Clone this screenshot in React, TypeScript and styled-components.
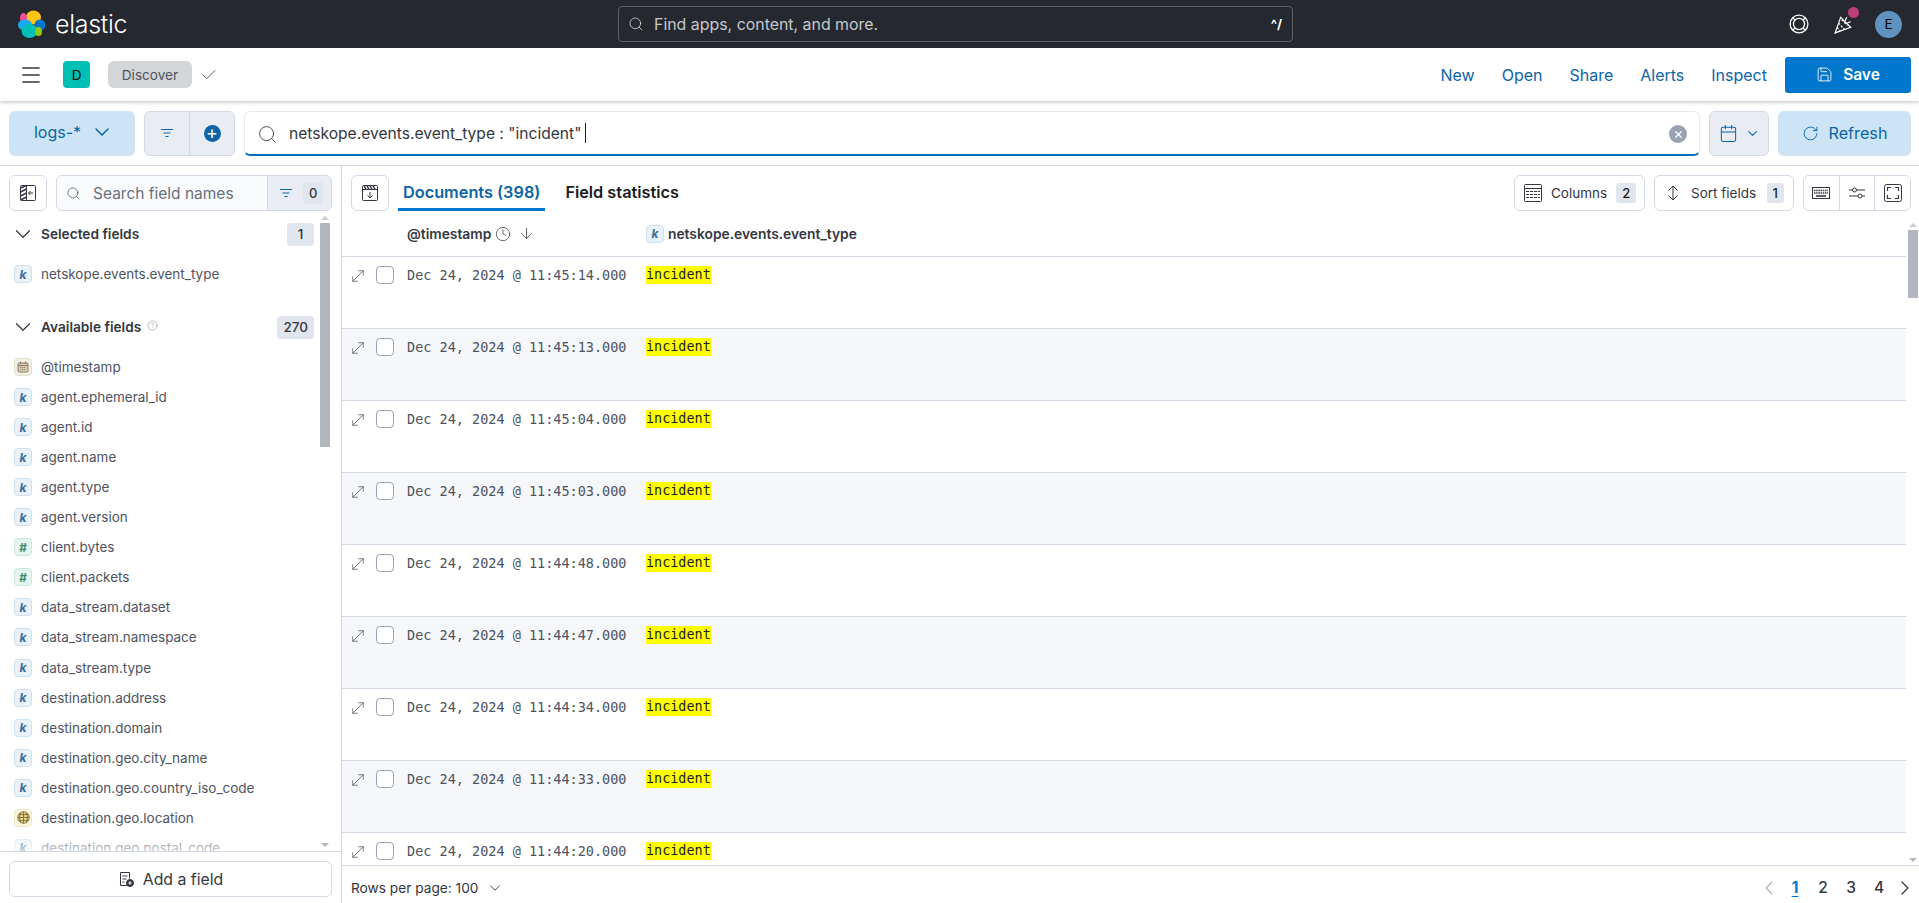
import React from "react";
import styled, { createGlobalStyle } from "styled-components";
import {
  ArrowDown,
  Calendar,
  Check,
  ChevronDown,
  ChevronLeft,
  ChevronRight,
  CircleHelp,
  Clock,
  Menu,
  MoveDiagonal,
  RotateCw,
  Save,
  Search,
  X,
} from "lucide-react";

const GlobalStyle = createGlobalStyle`
  html, body { margin: 0; padding: 0; height: 100%; overflow: hidden; background: #fff; }
  body { font-family: "Inter", "Liberation Sans", sans-serif; color: #343741; font-size: 14px; }
  * { box-sizing: border-box; }
  button { font-family: inherit; }
`;

const Page = styled.div`
  display: flex;
  flex-direction: column;
  height: 903px;
  overflow: hidden;
`;
const TopBar = styled.header`
  display: grid;
  grid-template-columns: 618px 675px 1fr;
  align-items: center;
  height: 48px;
  flex: none;
  background: #25282f;
`;
const Brand = styled.div`
  display: flex;
  align-items: center;
  gap: 9px;
  padding-left: 18px;
`;
const Wordmark = styled.span`
  font-size: 25px;
  font-weight: 300;
  letter-spacing: -0.3px;
  color: #fff;
`;
const GlobalSearch = styled.div`
  display: flex;
  align-items: center;
  height: 36px;
  padding: 0 10px 0 9px;
  gap: 10px;
  border: 1px solid #5c5f66;
  border-radius: 4px;
  font-size: 15.9px;
  color: #c6c8cc;
`;
const ShortcutKey = styled.span`
  margin-left: auto;
  font-size: 13px;
  font-weight: 700;
  color: #fff;
`;
const TopActions = styled.div`
  display: flex;
  align-items: center;
  justify-content: flex-end;
  gap: 21px;
  padding-right: 17px;
`;
const NewsIcon = styled.span`
  position: relative;
  display: flex;
  margin-left: 4px;
`;
const NewsDot = styled.span`
  position: absolute;
  top: -7px;
  right: -5px;
  width: 11px;
  height: 11px;
  border-radius: 50%;
  background: #bc3f7a;
`;
const Avatar = styled.span`
  display: flex;
  align-items: center;
  justify-content: center;
  width: 27px;
  height: 27px;
  border-radius: 50%;
  font-size: 13.5px;
  color: #000;
  background: #6092c0;
`;

const AppBar = styled.div`
  position: relative;
  z-index: 2;
  display: flex;
  align-items: center;
  height: 53px;
  flex: none;
  padding: 0 8px 0 19px;
  background: #fff;
  box-shadow: 0 1px 4px rgba(60, 66, 80, 0.35);
`;
const AppTile = styled.span`
  display: flex;
  align-items: center;
  justify-content: center;
  width: 27px;
  height: 27px;
  margin-left: 20px;
  border-radius: 4px;
  font-size: 13.5px;
  color: #000;
  background: #00bfb3;
`;
const Crumb = styled.span`
  display: flex;
  align-items: center;
  justify-content: center;
  width: 84px;
  height: 27px;
  margin-left: 18px;
  border-radius: 6px;
  font-size: 13.6px;
  color: #4e535f;
  background: #d3d5d8;
`;
const CrumbCheck = styled.span`
  display: flex;
  margin-left: 8px;
  color: #343741;
`;
const AppLinks = styled.nav`
  display: flex;
  align-items: center;
  gap: 27px;
  margin-left: auto;
`;
const AppLink = styled.a`
  font-size: 16px;
  font-weight: 400;
  color: #0b64a8;
`;
const SaveButton = styled.button`
  display: flex;
  align-items: center;
  justify-content: center;
  gap: 10px;
  width: 126px;
  height: 36px;
  margin-left: 18px;
  padding: 0;
  border: none;
  border-radius: 3px;
  font-size: 15.5px;
  font-weight: 600;
  color: #fff;
  background: #0077cc;
`;

const QueryRow = styled.div`
  display: flex;
  align-items: center;
  gap: 9px;
  height: 65px;
  flex: none;
  padding: 0 8px 0 9px;
  border-bottom: 1px solid #d3dae6;
`;
const DataViewButton = styled.button`
  display: flex;
  align-items: center;
  justify-content: center;
  gap: 9px;
  width: 126px;
  height: 45px;
  padding: 0 0 2px 4px;
  border: none;
  border-radius: 6px;
  font-size: 16px;
  font-weight: 400;
  color: #0b64a8;
  background: #cce4f5;
`;
const FilterGroup = styled.div`
  display: flex;
  width: 91px;
  height: 45px;
  flex: none;
  border: 1px solid #d3dae6;
  border-radius: 6px;
  background: #e9edf3;
`;
const FilterCell = styled.span<{ $divided?: boolean }>`
  display: flex;
  flex: 1;
  align-items: center;
  justify-content: center;
  color: #0b64a8;
  border-right: ${({ $divided }) => ($divided ? "1px solid #d3dae6" : "none")};
`;
const AddCircle = styled.span`
  display: flex;
  align-items: center;
  justify-content: center;
  width: 17px;
  height: 17px;
  border-radius: 50%;
  font-size: 18px;
  line-height: 1;
  color: #fff;
  background: #0b64a8;
`;
const QueryBar = styled.div`
  display: flex;
  flex: 1;
  align-items: center;
  height: 45px;
  padding: 0 12px 0 12px;
  border: 1px solid #e4e8f0;
  border-bottom: 2px solid #0071c2;
  border-radius: 6px;
  background: #fff;
`;
const QueryIcon = styled.span`
  display: flex;
  margin-top: 4px;
`;
const QueryText = styled.span`
  margin: 1px 0 0 11px;
  font-size: 15.6px;
  white-space: pre;
  color: #343741;
`;
const Caret = styled.span`
  width: 1px;
  height: 20px;
  margin-left: 4px;
  background: #1a1c21;
`;
const ClearButton = styled.span`
  display: flex;
  align-items: center;
  justify-content: center;
  width: 18px;
  height: 18px;
  margin: 3px 0 0 auto;
  border-radius: 50%;
  color: #fff;
  background: #98a2b3;
`;
const DateButton = styled.button`
  display: flex;
  align-items: center;
  justify-content: center;
  gap: 7px;
  width: 60px;
  height: 45px;
  padding: 0;
  flex: none;
  border: 1px solid #d3dae6;
  border-radius: 6px;
  color: #0b64a8;
  background: #e9edf3;
`;
const RefreshButton = styled.button`
  display: flex;
  align-items: center;
  justify-content: center;
  gap: 10px;
  width: 133px;
  height: 45px;
  padding: 0;
  flex: none;
  border: none;
  border-radius: 6px;
  font-size: 16.2px;
  font-weight: 400;
  color: #0b64a8;
  background: #cce4f5;
`;

const Workspace = styled.div`
  display: flex;
  flex: 1;
  min-height: 0;
`;
const Sidebar = styled.aside`
  display: flex;
  flex-direction: column;
  width: 342px;
  flex: none;
  border-right: 1px solid #d3dae6;
`;
const SideTop = styled.div`
  display: flex;
  gap: 9px;
  flex: none;
  padding: 9px 9px 0;
`;
const IconButton = styled.button`
  display: flex;
  align-items: center;
  justify-content: center;
  width: 38px;
  height: 36px;
  padding: 0;
  flex: none;
  border: 1px solid #d3dae6;
  border-radius: 6px;
  color: #343741;
  background: #fff;
`;
const FieldSearch = styled.div`
  display: flex;
  flex: 1;
  align-items: stretch;
  height: 36px;
  border: 1px solid #d3dae6;
  border-radius: 6px;
  overflow: hidden;
  background: #fafbfd;
`;
const FieldSearchInput = styled.div`
  display: flex;
  flex: 1;
  align-items: center;
  gap: 12px;
  padding-left: 9px;
  font-size: 15.5px;
  color: #69707d;
`;
const FieldFilter = styled.div`
  display: flex;
  align-items: center;
  gap: 10px;
  width: 64px;
  padding-left: 11px;
  border-left: 1px solid #d3dae6;
  background: #e9edf3;
  color: #0b64a8;
`;
const ZeroCount = styled.span`
  font-size: 13px;
  font-weight: 500;
  padding: 3px 6px;
  border-radius: 3px;
  color: #343741;
  background: #e0e5ee;
`;
const FieldScroller = styled.div`
  position: relative;
  flex: 1;
  min-height: 0;
  overflow: hidden;
  padding: 11px 0 0 14px;
`;
const SectionHead = styled.div<{ $gap: number }>`
  display: flex;
  align-items: center;
  height: 24px;
  padding-right: 27px;
  margin-bottom: ${({ $gap }) => $gap}px;
  font-size: 13.7px;
  font-weight: 600;
  color: #343741;
`;
const SectionChevron = styled.span`
  display: flex;
  margin-left: -4px;
`;
const SectionTitle = styled.span`
  margin-left: 5px;
`;
const HelpMark = styled.span`
  display: flex;
  margin: -3px 0 0 6px;
  color: #69707d;
`;
const CountBadge = styled.span`
  display: flex;
  align-items: center;
  justify-content: center;
  height: 23px;
  min-width: 27px;
  padding: 0 6px;
  margin-left: auto;
  border-radius: 4px;
  font-size: 13.5px;
  font-weight: 500;
  color: #343741;
  background: #e0e5ee;
`;
const FieldRow = styled.div<{ $gap?: number }>`
  display: flex;
  align-items: center;
  gap: 9px;
  height: 30.06px;
  margin-bottom: ${({ $gap }) => $gap ?? 0}px;
  font-size: 13.5px;
  color: #4e535f;
`;
const TypeTile = styled.span<{ $kind: "k" | "n" | "d" | "g" }>`
  display: flex;
  align-items: center;
  justify-content: center;
  width: 18px;
  height: 18px;
  flex: none;
  border-radius: 4px;
  font-size: 12px;
  font-weight: 700;
  font-style: italic;
  font-family: "Inter", sans-serif;
  color: ${({ $kind }) =>
    ({ k: "#3a6d9c", n: "#3d8a6d", d: "#8a7b5c", g: "#7d6c20" })[$kind]};
  background: ${({ $kind }) =>
    ({ k: "#eaf2f9", n: "#e6f5f0", d: "#f3f0e8", g: "#fbf6e2" })[$kind]};
  border: 1px solid
    ${({ $kind }) =>
      ({ k: "#cfe0ee", n: "#c9e9dd", d: "#e6e0d0", g: "#f0e8c4" })[$kind]};
`;
const FieldFade = styled.div`
  position: absolute;
  left: 0;
  right: 14px;
  bottom: 0;
  height: 18px;
  background: linear-gradient(rgba(255, 255, 255, 0.1), rgba(255, 255, 255, 0.7));
`;
const SideScrollbar = styled.div`
  position: absolute;
  top: 5px;
  right: 11px;
  bottom: 4px;
  width: 10px;
  display: flex;
  flex-direction: column;
  align-items: center;
`;
const ScrollThumb = styled.div<{ $height: number }>`
  width: 10px;
  height: ${({ $height }) => $height}px;
  background: #b2b6be;
`;
const ArrowUp = styled.span`
  width: 0;
  height: 0;
  margin-bottom: 3px;
  border: 4px solid transparent;
  border-top: none;
  border-bottom: 4px solid #c8ccd3;
`;
const ArrowDownMark = styled.span`
  width: 0;
  height: 0;
  margin-top: auto;
  border: 4px solid transparent;
  border-bottom: none;
  border-top: 4px solid #b2b6be;
`;
const SideFooter = styled.div`
  flex: none;
  height: 52px;
  padding: 9px 9px 0;
  border-top: 1px solid #d3dae6;
`;
const AddFieldButton = styled.button`
  display: flex;
  align-items: center;
  justify-content: center;
  gap: 9px;
  width: 100%;
  height: 36px;
  border: 1px solid #d3dae6;
  border-radius: 6px;
  font-size: 15.8px;
  color: #343741;
  background: #fff;
`;

const Main = styled.main`
  display: flex;
  flex: 1;
  flex-direction: column;
  min-width: 0;
`;
const MainTop = styled.div`
  display: flex;
  align-items: flex-start;
  height: 45px;
  flex: none;
  padding: 9px 8px 0 9px;
`;
const Tabs = styled.div`
  display: flex;
  gap: 15px;
  margin-left: 9px;
`;
const Tab = styled.span<{ $active?: boolean }>`
  display: flex;
  align-items: center;
  height: 36px;
  padding: 0 5px;
  font-size: 16.3px;
  font-weight: 600;
  color: ${({ $active }) => ($active ? "#0b64a8" : "#1a1c21")};
  border-bottom: 3px solid ${({ $active }) => ($active ? "#0077cc" : "transparent")};
`;
const GridTools = styled.div`
  display: flex;
  gap: 9px;
  margin-left: auto;
`;
const ToolButton = styled.button<{ $width: number }>`
  display: flex;
  align-items: center;
  gap: 9px;
  width: ${({ $width }) => $width}px;
  height: 36px;
  padding: 0 9px;
  border: 1px solid #d3dae6;
  border-radius: 6px;
  font-size: 13.5px;
  white-space: nowrap;
  color: #343741;
  background: #fff;

  svg {
    flex: none;
  }
`;
const ToolCount = styled.span`
  padding: 2px 6px;
  margin-left: auto;
  border-radius: 3px;
  font-size: 13px;
  font-weight: 500;
  color: #1a1c21;
  background: #e0e5ee;
`;
const ToolGroup = styled.div`
  display: flex;
  width: 108px;
  height: 36px;
  border: 1px solid #d3dae6;
  border-radius: 6px;
`;
const ToolCell = styled.span<{ $divided?: boolean }>`
  display: flex;
  flex: 1;
  align-items: center;
  justify-content: center;
  color: #343741;
  border-right: ${({ $divided }) => ($divided ? "1px solid #d3dae6" : "none")};
`;
const GridArea = styled.div`
  display: flex;
  flex: 1;
  min-height: 0;
`;
const GridBody = styled.div`
  flex: 1;
  min-width: 0;
  overflow: hidden;
`;
const GridHead = styled.div`
  display: flex;
  align-items: center;
  height: 46px;
  padding-left: 65px;
  border-bottom: 1px solid #d3dae6;
  font-size: 13.8px;
  font-weight: 600;
  color: #343741;
`;
const TimeHead = styled.span`
  display: flex;
  align-items: center;
  gap: 4px;
  width: 239px;
`;
const SortMark = styled.span`
  display: flex;
  margin-left: 3px;
`;
const FieldHead = styled.span`
  display: flex;
  align-items: center;
  gap: 4px;
`;
const DocRow = styled.div<{ $striped: boolean }>`
  display: flex;
  align-items: flex-start;
  height: 72px;
  padding: 9px 0 0 7px;
  border-bottom: 1px solid #d3dae6;
  background: ${({ $striped }) => ($striped ? "#f5f7fa" : "#fff")};
`;
const ExpandMark = styled.span`
  display: flex;
  width: 27px;
  margin-top: 1px;
  color: #4e535f;
`;
const RowCheck = styled.span`
  width: 18px;
  height: 18px;
  flex: none;
  border: 1px solid #98a2b3;
  border-radius: 4px;
  background: #fff;
`;
const DateCell = styled.span`
  width: 239px;
  margin-left: 13px;
  font-family: "DejaVu Sans Mono", "Liberation Mono", monospace;
  font-size: 13.5px;
  line-height: 18px;
  color: #4e535f;
`;
const Highlight = styled.mark`
  font-family: "DejaVu Sans Mono", "Liberation Mono", monospace;
  font-size: 13.45px;
  line-height: 18px;
  color: #1a1c21;
  background: #ffff00;
`;
const GridScrollbar = styled.div`
  width: 13px;
  flex: none;
  display: flex;
  flex-direction: column;
  align-items: center;
  padding: 12px 1px 3px 2px;
`;
const GridFooter = styled.footer`
  display: flex;
  align-items: center;
  height: 38px;
  flex: none;
  padding: 6px 2px 0 9px;
  border-top: 1px solid #d3dae6;
  font-size: 13.7px;
  color: #343741;
`;
const RowsPer = styled.span`
  display: flex;
  align-items: center;
  gap: 8px;
`;
const Pager = styled.nav`
  display: flex;
  align-items: center;
  margin-left: auto;
`;
const PageNum = styled.span<{ $current?: boolean }>`
  width: 28px;
  text-align: center;
  font-size: 15.5px;
  font-weight: ${({ $current }) => ($current ? 700 : 500)};
  color: ${({ $current }) => ($current ? "#0077cc" : "#343741")};
  text-decoration: ${({ $current }) => ($current ? "underline" : "none")};
  text-underline-offset: 3px;
`;
const PagerArrow = styled.span<{ $off?: boolean }>`
  display: flex;
  color: ${({ $off }) => ($off ? "#a9b3c2" : "#343741")};
`;

const ElasticLogo = () => (
  <svg width="28" height="28" viewBox="0 0 28 28">
    <ellipse cx="15.5" cy="7.5" rx="7.5" ry="7" fill="#fec514" />
    <ellipse cx="5.5" cy="8" rx="3.5" ry="5" fill="#f04e98" />
    <ellipse cx="7" cy="15" rx="7" ry="5.5" fill="#1ba9f5" />
    <ellipse cx="22" cy="15" rx="5.5" ry="5.5" fill="#0077cc" />
    <ellipse cx="11.5" cy="21" rx="8" ry="7" fill="#00bfb3" />
    <ellipse cx="20.5" cy="21.5" rx="3.5" ry="4.5" fill="#93c90e" />
  </svg>
);

const FilterIcon = () => (
  <svg width="14" height="14" viewBox="0 0 14 14" stroke="currentColor" fill="none">
    <path d="M1 3.5h12M3.5 7h7M5.5 10.5h3" />
  </svg>
);

const CollapseIcon = () => (
  <svg width="18" height="18" viewBox="0 0 18 18" fill="none" stroke="currentColor">
    <rect x="1.5" y="1.5" width="15" height="15" rx="1" />
    <path d="M7.5 1.5v15M14 9H9.5M11.5 7L9.5 9l2 2" />
    <path d="M1.5 4l6-2.5M1.5 8l6-3M1.5 12l6-3M1.5 16l6-3" strokeWidth="1.4" />
  </svg>
);

const DisplayIcon = () => (
  <svg width="18" height="18" viewBox="0 0 18 18" fill="none" stroke="currentColor">
    <rect x="1.5" y="1.5" width="15" height="15" rx="1" />
    <path d="M1.5 5.5h15M9 8v6M6.5 11.5L9 14l2.5-2.5" />
    <path d="M3 1.5L5 5.5M6 1.5L8 5.5M9 1.5L11 5.5M12 1.5L14 5.5" strokeWidth="1.5" />
  </svg>
);

const PartyIcon = () => (
  <svg width="20" height="20" viewBox="0 0 18 18" fill="none" stroke="#fff" strokeWidth="1.1">
    <path d="M6 3L1 17l14-5z" />
    <path d="M4 8l6 6.5M2.8 12l2.8 3.5M7 5.2l5 5.2" strokeDasharray="2 1.3" />
    <path d="M10 6l1.5-3M12 8l3-1" />
  </svg>
);

const HelpIcon = () => (
  <svg width="20" height="20" viewBox="0 0 18 18" fill="none" stroke="#fff" strokeWidth="1.2">
    <circle cx="9" cy="9" r="8" />
    <circle cx="9" cy="9" r="5" />
    <path d="M3.3 3.3l2.2 2.2M14.7 3.3l-2.2 2.2M3.3 14.7l2.2-2.2M14.7 14.7l-2.2-2.2" />
  </svg>
);

const ColumnsIcon = () => (
  <svg width="18" height="18" viewBox="0 0 18 18" fill="none" stroke="currentColor">
    <rect x="0.5" y="0.5" width="17" height="17" rx="1" />
    <path d="M0.5 4.5h17" />
    <path d="M2 7.5h14M2 10.5h14M2 13.5h14" strokeDasharray="3.2 0.8" strokeWidth="1.2" />
  </svg>
);

const SortIcon = () => (
  <svg width="18" height="16" viewBox="0 0 18 16" fill="none" stroke="currentColor">
    <path d="M9 1v14M4.5 5.5L9 1l4.5 4.5M4.5 10.5L9 15l4.5-4.5" />
  </svg>
);

const KeyboardIcon = () => (
  <svg width="18" height="14" viewBox="0 0 18 14" fill="none" stroke="currentColor">
    <rect x="0.5" y="1.5" width="17" height="11" />
    <path d="M2 4.5h14M2 7h14" strokeDasharray="1.5 0.7" strokeWidth="1.6" />
    <path d="M4 10h10" strokeWidth="1.6" />
  </svg>
);

const TuneIcon = () => (
  <svg width="16" height="14" viewBox="0 0 16 14" fill="none" stroke="currentColor">
    <path d="M0 4h3.5M7.5 4H16M0 10h9M13 10h3" />
    <circle cx="5.5" cy="4" r="2" />
    <circle cx="11" cy="10" r="2" />
  </svg>
);

const FullScreenIcon = () => (
  <svg width="18" height="18" viewBox="0 0 18 18" fill="none" stroke="currentColor">
    <rect x="0.5" y="0.5" width="17" height="17" rx="2" />
    <path d="M3.5 7V3.5H7M11 3.5h3.5V7M14.5 11v3.5H11M7 14.5H3.5V11" strokeWidth="1.2" />
  </svg>
);

const TableGlyph = () => (
  <svg width="16" height="16" viewBox="0 0 16 16" fill="none" stroke="#343741">
    <path d="M10.5 14.5h-8v-13h9v6" />
    <path d="M4.5 5h5M4.5 8h4M4.5 11h2" />
    <circle cx="12" cy="12" r="3.5" fill="#343741" />
    <path d="M10.3 12h3.4M12 10.3v3.4" stroke="#fff" />
  </svg>
);

const GlobeGlyph = () => (
  <svg width="13" height="13" viewBox="0 0 12 12" fill="none" stroke="#7d6c20" strokeWidth="0.8">
    <circle cx="6" cy="6" r="5.3" fill="#e4d99f" />
    <path d="M0.7 6h10.6M6 0.7v10.6M1.5 3.3h9M1.5 8.7h9M3.6 1.2c-1.6 3-1.6 6.6 0 9.6M8.4 1.2c1.6 3 1.6 6.6 0 9.6" />
  </svg>
);

const DateGlyph = () => (
  <svg width="12" height="12" viewBox="0 0 12 12" fill="none" stroke="#8a7b5c">
    <rect x="1" y="2" width="10" height="9" rx="1" fill="#d8d0bc" />
    <path d="M1 4.5h10M3.5 0.5v2.5M8.5 0.5v2.5" />
    <path d="M3 6.5h6M3 8.5h6" strokeDasharray="1.2 0.8" />
  </svg>
);

type Kind = "k" | "n" | "d" | "g";

const availableFields: [Kind, string][] = [
  ["d", "@timestamp"],
  ["k", "agent.ephemeral_id"],
  ["k", "agent.id"],
  ["k", "agent.name"],
  ["k", "agent.type"],
  ["k", "agent.version"],
  ["n", "client.bytes"],
  ["n", "client.packets"],
  ["k", "data_stream.dataset"],
  ["k", "data_stream.namespace"],
  ["k", "data_stream.type"],
  ["k", "destination.address"],
  ["k", "destination.domain"],
  ["k", "destination.geo.city_name"],
  ["k", "destination.geo.country_iso_code"],
  ["g", "destination.geo.location"],
  ["k", "destination.geo.postal_code"],
];

const times = ["11:45:14", "11:45:13", "11:45:04", "11:45:03", "11:44:48", "11:44:47", "11:44:34", "11:44:33", "11:44:20"];

const TypeIcon = ({ kind }: { kind: Kind }) => (
  <TypeTile $kind={kind}>
    {kind === "k" && "k"}
    {kind === "n" && "#"}
    {kind === "d" && <DateGlyph />}
    {kind === "g" && <GlobeGlyph />}
  </TypeTile>
);

const App = () => {
  return (
    <Page>
      <GlobalStyle />
      <TopBar>
        <Brand>
          <ElasticLogo />
          <Wordmark>elastic</Wordmark>
        </Brand>
        <GlobalSearch>
          <Search size={16} strokeWidth={1} color="#fff" />
          Find apps, content, and more.
          <ShortcutKey>^/</ShortcutKey>
        </GlobalSearch>
        <TopActions>
          <HelpIcon />
          <NewsIcon>
            <PartyIcon />
            <NewsDot />
          </NewsIcon>
          <Avatar>E</Avatar>
        </TopActions>
      </TopBar>

      <AppBar>
        <Menu size={24} strokeWidth={1.7} color="#343741" />
        <AppTile>D</AppTile>
        <Crumb>Discover</Crumb>
        <CrumbCheck>
          <Check size={18} strokeWidth={1.1} />
        </CrumbCheck>
        <AppLinks>
          <AppLink>New</AppLink>
          <AppLink>Open</AppLink>
          <AppLink>Share</AppLink>
          <AppLink>Alerts</AppLink>
          <AppLink>Inspect</AppLink>
        </AppLinks>
        <SaveButton>
          <Save size={17} strokeWidth={1.2} />
          Save
        </SaveButton>
      </AppBar>

      <QueryRow>
        <DataViewButton>
          logs-*
          <ChevronDown size={24} strokeWidth={1.5} />
        </DataViewButton>
        <FilterGroup>
          <FilterCell $divided>
            <FilterIcon />
          </FilterCell>
          <FilterCell>
            <AddCircle>+</AddCircle>
          </FilterCell>
        </FilterGroup>
        <QueryBar>
          <QueryIcon>
            <Search size={21} strokeWidth={1} color="#343741" />
          </QueryIcon>
          <QueryText>netskope.events.event_type : "incident"</QueryText>
          <Caret />
          <ClearButton>
            <X size={11} strokeWidth={3} />
          </ClearButton>
        </QueryBar>
        <DateButton>
          <Calendar size={19} strokeWidth={1.3} />
          <ChevronDown size={15} strokeWidth={1.8} />
        </DateButton>
        <RefreshButton>
          <RotateCw size={17} strokeWidth={1.3} />
          Refresh
        </RefreshButton>
      </QueryRow>

      <Workspace>
        <Sidebar>
          <SideTop>
            <IconButton>
              <CollapseIcon />
            </IconButton>
            <FieldSearch>
              <FieldSearchInput>
                <Search size={15} strokeWidth={1} color="#343741" />
                Search field names
              </FieldSearchInput>
              <FieldFilter>
                <FilterIcon />
                <ZeroCount>0</ZeroCount>
              </FieldFilter>
            </FieldSearch>
          </SideTop>
          <FieldScroller>
            <SectionHead $gap={13}>
              <SectionChevron>
                <ChevronDown size={26} strokeWidth={1.1} />
              </SectionChevron>
              <SectionTitle>Selected fields</SectionTitle>
              <CountBadge>1</CountBadge>
            </SectionHead>
            <FieldRow $gap={26}>
              <TypeIcon kind="k" />
              netskope.events.event_type
            </FieldRow>
            <SectionHead $gap={13}>
              <SectionChevron>
                <ChevronDown size={26} strokeWidth={1.1} />
              </SectionChevron>
              <SectionTitle>Available fields</SectionTitle>
              <HelpMark>
                <CircleHelp size={11} strokeWidth={1} />
              </HelpMark>
              <CountBadge>270</CountBadge>
            </SectionHead>
            {availableFields.map(([kind, name]) => (
              <FieldRow key={name}>
                <TypeIcon kind={kind} />
                {name}
              </FieldRow>
            ))}
            <FieldFade />
            <SideScrollbar>
              <ArrowUp />
              <ScrollThumb $height={224} />
              <ArrowDownMark />
            </SideScrollbar>
          </FieldScroller>
          <SideFooter>
            <AddFieldButton>
              <TableGlyph />
              Add a field
            </AddFieldButton>
          </SideFooter>
        </Sidebar>

        <Main>
          <MainTop>
            <IconButton>
              <DisplayIcon />
            </IconButton>
            <Tabs>
              <Tab $active>Documents (398)</Tab>
              <Tab>Field statistics</Tab>
            </Tabs>
            <GridTools>
              <ToolButton $width={131}>
                <ColumnsIcon />
                Columns
                <ToolCount>2</ToolCount>
              </ToolButton>
              <ToolButton $width={140}>
                <SortIcon />
                Sort fields
                <ToolCount>1</ToolCount>
              </ToolButton>
              <ToolGroup>
                <ToolCell $divided>
                  <KeyboardIcon />
                </ToolCell>
                <ToolCell $divided>
                  <TuneIcon />
                </ToolCell>
                <ToolCell>
                  <FullScreenIcon />
                </ToolCell>
              </ToolGroup>
            </GridTools>
          </MainTop>
          <GridArea>
            <GridBody>
              <GridHead>
                <TimeHead>
                  @timestamp
                  <Clock size={16} strokeWidth={1.1} />
                  <SortMark>
                    <ArrowDown size={17} strokeWidth={1.1} />
                  </SortMark>
                </TimeHead>
                <FieldHead>
                  <TypeIcon kind="k" />
                  netskope.events.event_type
                </FieldHead>
              </GridHead>
              {times.map((time, index) => (
                <DocRow key={time} $striped={index % 2 === 1}>
                  <ExpandMark>
                    <MoveDiagonal size={18} strokeWidth={1} />
                  </ExpandMark>
                  <RowCheck />
                  <DateCell>Dec 24, 2024 @ {time}.000</DateCell>
                  <Highlight>incident</Highlight>
                </DocRow>
              ))}
            </GridBody>
            <GridScrollbar>
              <ArrowUp />
              <ScrollThumb $height={68} />
              <ArrowDownMark />
            </GridScrollbar>
          </GridArea>
          <GridFooter>
            <RowsPer>
              Rows per page: 100
              <ChevronDown size={18} strokeWidth={1.2} />
            </RowsPer>
            <Pager>
              <PagerArrow $off>
                <ChevronLeft size={24} strokeWidth={1.2} />
              </PagerArrow>
              <PageNum $current>1</PageNum>
              <PageNum>2</PageNum>
              <PageNum>3</PageNum>
              <PageNum>4</PageNum>
              <PagerArrow>
                <ChevronRight size={24} strokeWidth={1.2} />
              </PagerArrow>
            </Pager>
          </GridFooter>
        </Main>
      </Workspace>
    </Page>
  );
};

export default App;
